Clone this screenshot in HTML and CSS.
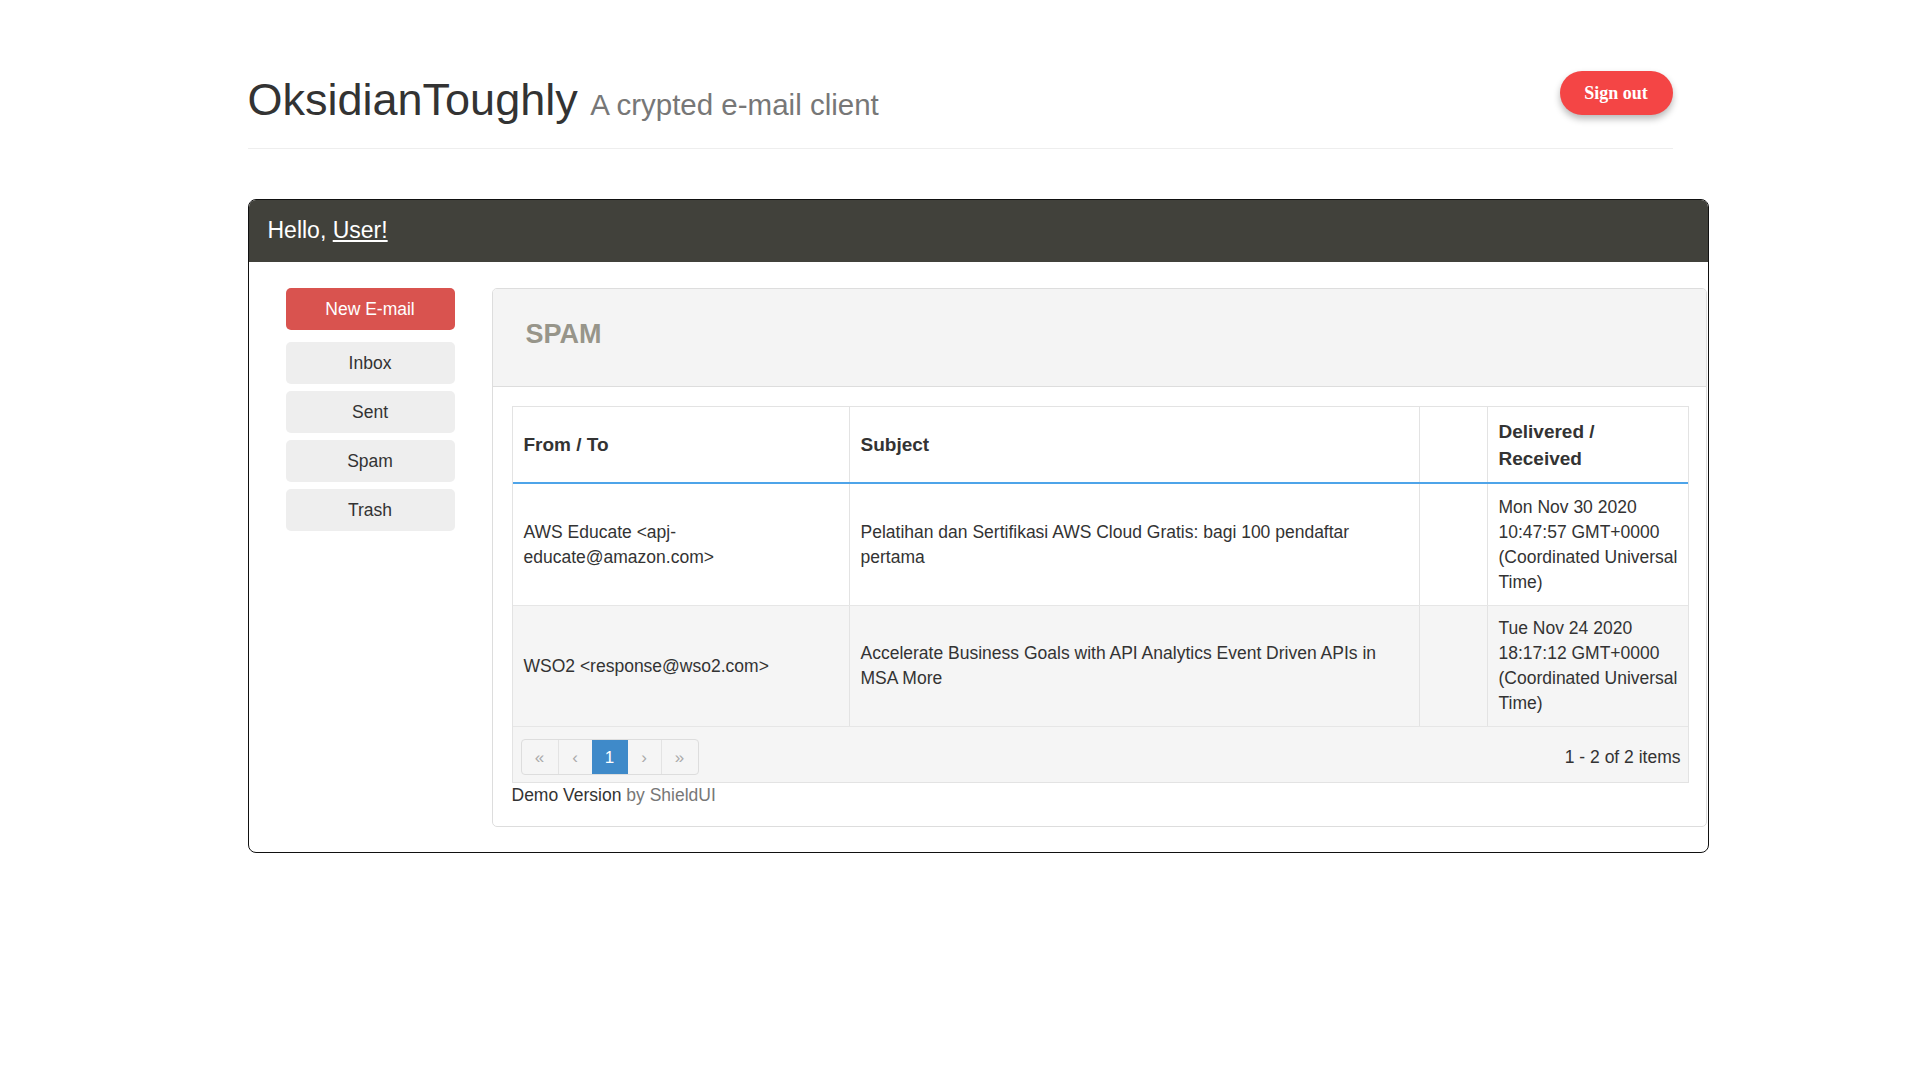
FILE: index.html
```html
<!DOCTYPE html>
<html lang="en">
<head>
<meta charset="utf-8">
<title>OksidianToughly</title>
<link rel="stylesheet" href="styles.css">
</head>
<body>
<div class="container">
  <header class="page-header">
    <h1 class="title">OksidianToughly <small>A crypted e-mail client</small></h1>
    <button class="signout">Sign out</button>
  </header>

  <section class="card">
    <div class="card-head">Hello, <a href="#">User!</a></div>
    <div class="card-body">
      <nav class="sidebar">
        <button class="btn btn-new">New E-mail</button>
        <button class="btn btn-nav">Inbox</button>
        <button class="btn btn-nav">Sent</button>
        <button class="btn btn-nav">Spam</button>
        <button class="btn btn-nav">Trash</button>
      </nav>
      <div class="panel">
        <div class="panel-head"><h3>SPAM</h3></div>
        <div class="panel-body">
          <div class="grid">
            <div class="row row-head">
              <div class="cell c1">From / To</div>
              <div class="cell c2">Subject</div>
              <div class="cell c3"></div>
              <div class="cell c4">Delivered / Received</div>
            </div>
            <div class="row">
              <div class="cell c1">AWS Educate &lt;apj-educate@amazon.com&gt;</div>
              <div class="cell c2">Pelatihan dan Sertifikasi AWS Cloud Gratis: bagi 100 pendaftar pertama</div>
              <div class="cell c3"></div>
              <div class="cell c4">Mon Nov 30 2020 10:47:57 GMT+0000 (Coordinated Universal Time)</div>
            </div>
            <div class="row row-alt">
              <div class="cell c1">WSO2 &lt;response@wso2.com&gt;</div>
              <div class="cell c2">Accelerate Business Goals with API Analytics Event Driven APIs in MSA More</div>
              <div class="cell c3"></div>
              <div class="cell c4">Tue Nov 24 2020 18:17:12 GMT+0000 (Coordinated Universal Time)</div>
            </div>
            <div class="pager">
              <div class="pages">
                <span class="pg pg-w1">&laquo;</span>
                <span class="pg pg-w2">&lsaquo;</span>
                <span class="pg pg-active">1</span>
                <span class="pg pg-w3">&rsaquo;</span>
                <span class="pg pg-w4">&raquo;</span>
              </div>
              <div class="info">1 - 2 of 2 items</div>
            </div>
          </div>
          <div class="demo">Demo Version <span class="by">by ShieldUI</span></div>
        </div>
      </div>
    </div>
  </section>
</div>
</body>
</html>
```
FILE: styles.css
```css
* { box-sizing: border-box; }
html, body { margin: 0; padding: 0; background: #fff; }
body {
  font-family: "Liberation Sans", Arial, sans-serif;
  font-size: 17.5px;
  line-height: 25px;
  color: #333;
}
.container { width: 1425px; margin: 0 auto; }

.page-header {
  display: flex;
  justify-content: space-between;
  align-items: flex-start;
  margin: 50px 0 50px;
  padding-bottom: 11px;
  border-bottom: 1px solid #eee;
}
.title {
  margin: 25px 0 12.5px;
  font-size: 45px;
  line-height: 1.1;
  font-weight: 400;
  color: #333;
}
.title small { font-size: 29.5px; color: #777; font-weight: 400; }
.signout {
  margin-top: 21px;
  width: 113px;
  height: 44px;
  border: none;
  border-radius: 22px;
  background: #f44545;
  color: #fff;
  font-family: "Liberation Serif", "Times New Roman", serif;
  font-weight: 700;
  font-size: 18px;
  box-shadow: 0 4px 7px rgba(0, 0, 0, 0.28);
  padding: 0;
}

.card {
  width: 1461px;
  border: 1px solid #111;
  border-radius: 8px;
  overflow: hidden;
}
.card-head {
  height: 62px;
  line-height: 60px;
  background: #41413b;
  color: #fff;
  font-size: 23px;
  padding-left: 19px;
}
.card-head a { color: #fff; text-decoration: underline; }
.card-body {
  display: grid;
  grid-template-columns: 243px 1215px;
  padding: 26px 0 25px;
}

.sidebar {
  display: flex;
  flex-direction: column;
  gap: 7px;
  padding: 0 37px;
}
.btn {
  height: 42px;
  border: none;
  border-radius: 5px;
  font-family: "Liberation Sans", Arial, sans-serif;
  font-size: 17.5px;
  padding: 0;
}
.btn-new { background: #d9534f; color: #fff; margin-bottom: 5px; }
.btn-nav { background: #eee; color: #333; }

.panel {
  border: 1px solid #ddd;
  border-radius: 5px;
  overflow: hidden;
}
.panel-head {
  height: 98px;
  background: #f4f4f4;
  border-bottom: 1px solid #ddd;
  padding: 31px 0 0 33px;
}
.panel-head h3 {
  margin: 0;
  font-size: 27px;
  line-height: 1.1;
  font-weight: 700;
  color: #97958a;
}
.panel-body { padding: 19px 18px 18px 19px; }

.grid { width: 1177px; border: 1px solid #e3e3e3; }
.row { display: grid; grid-template-columns: 337px 570px 68px 200px; border-bottom: 1px solid #e6e6e6; }
.row-head { border-bottom: 2px solid #4ea4e9; }
.row-alt { background: #f5f5f5; }
.cell {
  display: flex;
  align-items: center;
  padding: 10.5px 8px 10px 11px;
  border-right: 1px solid #e3e3e3;
}
.cell.c4 { border-right: none; }
.row-head .cell {
  font-weight: 700;
  font-size: 19px;
  line-height: 27px;
  padding-top: 10.5px;
  padding-bottom: 10.5px;
  min-height: 75px;
}

.pager {
  display: flex;
  justify-content: space-between;
  align-items: center;
  background: #f5f5f5;
  padding: 12px 7px 7px 8px;
}
.pages {
  display: flex;
  border: 1px solid #ddd;
  border-radius: 4px;
  overflow: hidden;
  height: 36px;
}
.pg {
  display: flex;
  align-items: center;
  justify-content: center;
  color: #aaa;
  border-left: 1px solid #e3e3e3;
  font-size: 17px;
}
.pg:first-child { border-left: none; }
.pg-w1 { width: 36px; }
.pg-w2 { width: 34px; }
.pg-w3 { width: 33px; }
.pg-w4 { width: 37px; }
.pg-active { width: 36px; background: #3f8ac9; color: #fff; border-left: none; }
.pg-active + .pg { border-left: none; }
.info { color: #333; }

.demo { color: #333; }
.demo .by { color: #777; }
```
